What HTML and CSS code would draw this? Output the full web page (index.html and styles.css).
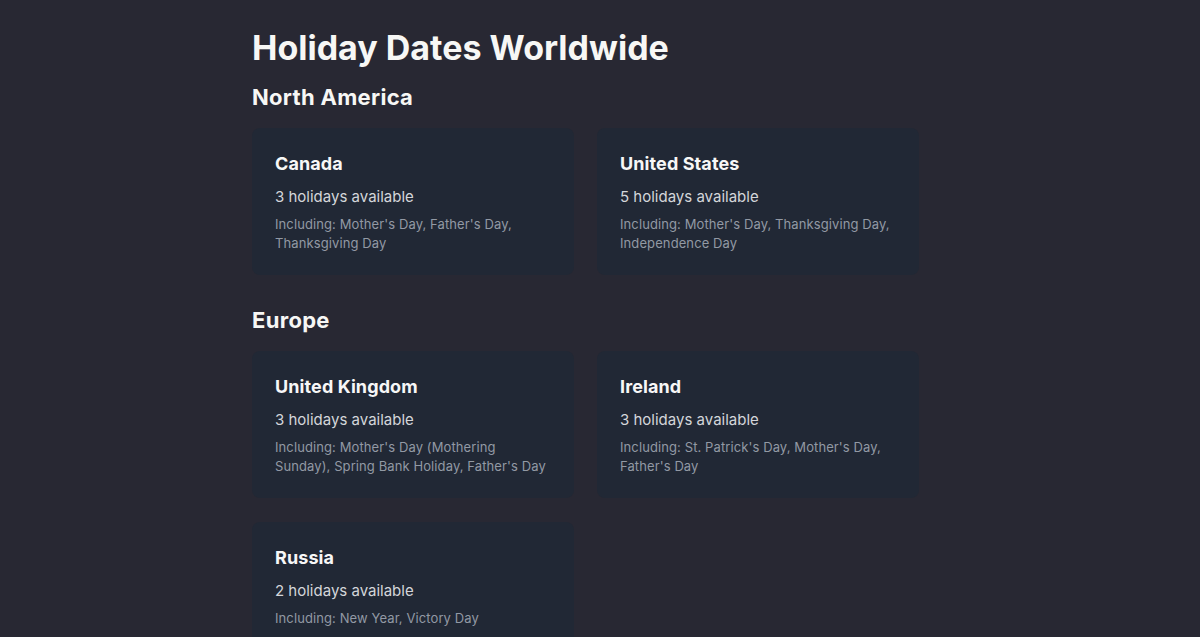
FILE: index.html
```html
<!DOCTYPE html>
<html lang="en">
<head>
<meta charset="utf-8">
<title>Holiday Dates Worldwide</title>
<link rel="stylesheet" href="styles.css">
</head>
<body>
<main class="page">
  <h1 class="page-title">Holiday Dates Worldwide</h1>

  <section class="region">
    <h2 class="region-title">North America</h2>
    <div class="cards">
      <article class="card">
        <h3 class="card-title">Canada</h3>
        <p class="card-count">3 holidays available</p>
        <p class="card-list">Including: Mother's Day, Father's Day, Thanksgiving Day</p>
      </article>
      <article class="card">
        <h3 class="card-title">United States</h3>
        <p class="card-count">5 holidays available</p>
        <p class="card-list">Including: Mother's Day, Thanksgiving Day, Independence Day</p>
      </article>
    </div>
  </section>

  <section class="region">
    <h2 class="region-title">Europe</h2>
    <div class="cards">
      <article class="card">
        <h3 class="card-title">United Kingdom</h3>
        <p class="card-count">3 holidays available</p>
        <p class="card-list">Including: Mother's Day (Mothering Sunday), Spring Bank Holiday, Father's Day</p>
      </article>
      <article class="card">
        <h3 class="card-title">Ireland</h3>
        <p class="card-count">3 holidays available</p>
        <p class="card-list">Including: St. Patrick's Day, Mother's Day, Father's Day</p>
      </article>
      <article class="card">
        <h3 class="card-title">Russia</h3>
        <p class="card-count">2 holidays available</p>
        <p class="card-list">Including: New Year, Victory Day</p>
      </article>
    </div>
  </section>
</main>
</body>
</html>
```

FILE: styles.css
```css
* { box-sizing: border-box; }

html, body {
  margin: 0;
  padding: 0;
  background: #282833;
}

body {
  font-family: Inter, "Noto Sans", "Liberation Sans", sans-serif;
  color: #f5f5f5;
}

.page {
  width: 696px;
  margin: 0 auto;
  padding-top: 28px;
}

.page-title {
  margin: 0;
  font-size: 34px;
  line-height: 40px;
  font-weight: 700;
  color: #f7f7f5;
}

.region {
  margin-top: 13px;
}

.region + .region {
  margin-top: 29px;
}

.region-title {
  margin: 0 0 15px;
  font-size: 22px;
  line-height: 32px;
  font-weight: 700;
  letter-spacing: 0.3px;
  color: #f7f7f5;
}

.cards {
  display: grid;
  grid-template-columns: repeat(2, 322px);
  column-gap: 23px;
  row-gap: 24px;
}

.card {
  background: #212835;
  border-radius: 8px;
  padding: 25px 23px 22px;
}

.card-title {
  margin: 0;
  font-size: 18px;
  line-height: 22px;
  font-weight: 700;
  letter-spacing: 0.1px;
  color: #f7f7f7;
}

.card-count {
  margin: 11px 0 0;
  font-size: 15px;
  line-height: 22px;
  color: #d4d6da;
}

.card-list {
  margin: 7px 0 0;
  font-size: 13px;
  line-height: 19px;
  letter-spacing: 0.1px;
  color: #9299a4;
}
```
